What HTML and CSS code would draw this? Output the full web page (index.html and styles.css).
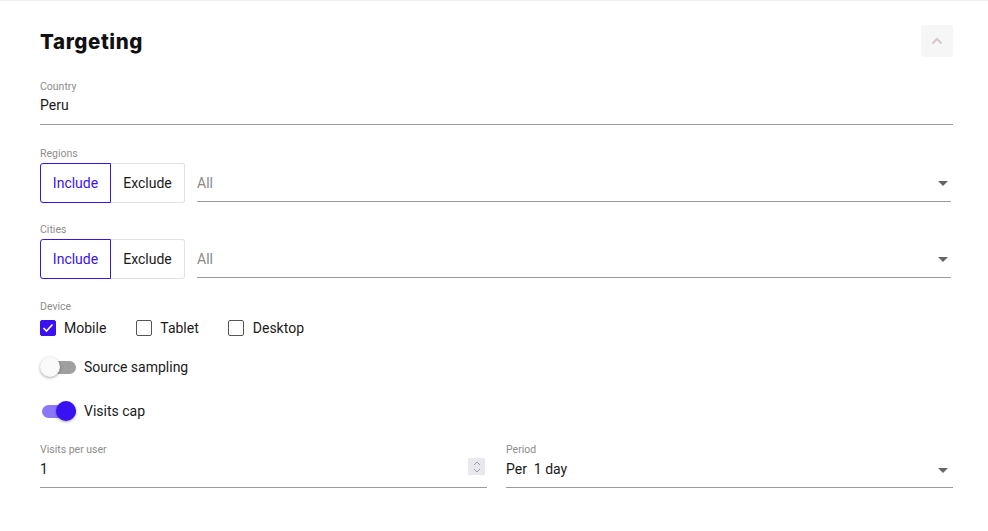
FILE: index.html
```html
<!DOCTYPE html>
<html>
<head>
<meta charset="utf-8">
<link rel="stylesheet" href="styles.css">
</head>
<body>
<div class="card">
  <div class="header">
    <h2 class="title">Targeting</h2>
    <button class="collapse">
      <svg width="12" height="8" viewBox="0 0 12 8"><path d="M1.5 6.5 L6 2 L10.5 6.5" fill="none" stroke="#d8c6cc" stroke-width="2"/></svg>
    </button>
  </div>

  <div class="field country">
    <div class="label">Country</div>
    <div class="value">Peru</div>
  </div>

  <div class="group regions">
    <div class="label">Regions</div>
    <div class="row">
      <div class="toggle">
        <span class="tbtn active">Include</span>
        <span class="tbtn">Exclude</span>
      </div>
      <div class="select"><span class="placeholder">All</span><span class="arrow"></span></div>
    </div>
  </div>

  <div class="group cities">
    <div class="label">Cities</div>
    <div class="row">
      <div class="toggle">
        <span class="tbtn active">Include</span>
        <span class="tbtn">Exclude</span>
      </div>
      <div class="select"><span class="placeholder">All</span><span class="arrow"></span></div>
    </div>
  </div>

  <div class="group device">
    <div class="label">Device</div>
    <div class="checks">
      <label class="check"><span class="box checked"><svg width="12" height="10" viewBox="0 0 12 10"><path d="M1.5 5 L4.5 8 L10.5 1.5" fill="none" stroke="#fff" stroke-width="1.6"/></svg></span>Mobile</label>
      <label class="check"><span class="box"></span>Tablet</label>
      <label class="check"><span class="box"></span>Desktop</label>
    </div>
  </div>

  <div class="switchrow first">
    <span class="switch off"><span class="track"></span><span class="thumb"></span></span>
    <span class="stext">Source sampling</span>
  </div>
  <div class="switchrow second">
    <span class="switch on"><span class="track"></span><span class="thumb"></span></span>
    <span class="stext">Visits cap</span>
  </div>

  <div class="bottom">
    <div class="field half">
      <div class="label">Visits per user</div>
      <div class="value withspin">1<span class="spin"><svg width="8" height="14" viewBox="0 0 8 14"><path d="M1 5 L4 2 L7 5 M1 9 L4 12 L7 9" fill="none" stroke="#9a9aa8" stroke-width="1"/></svg></span></div>
    </div>
    <div class="field half">
      <div class="label">Period</div>
      <div class="value withspin">Per&nbsp; 1 day<span class="arrow"></span></div>
    </div>
  </div>
</div>
</body>
</html>
```
FILE: styles.css
```css
* { box-sizing: border-box; }
html, body { margin: 0; padding: 0; background: #fff; }
body { font-family: Roboto, "Liberation Sans", sans-serif; color: #1a1a1a; }
.card {
  width: 988px;
  height: 531px;
  border-top: 1px solid #efefef;
  padding: 24px 35px 0 40px;
  background: #fff;
}
.header {
  display: flex;
  justify-content: space-between;
  align-items: center;
  height: 32px;
}
.title {
  margin: 0;
  font-family: Inter, "Open Sans", sans-serif;
  font-weight: 800;
  font-size: 20.5px;
  letter-spacing: 0.6px;
  color: #111;
}
.collapse {
  width: 32px;
  height: 32px;
  border: none;
  border-radius: 3px;
  background: #f7f6f6;
  display: flex;
  align-items: center;
  justify-content: center;
  padding: 0;
}
.label {
  font-size: 10.5px;
  color: #8d8d8d;
  line-height: 13px;
}
.field .value {
  font-size: 14px;
  line-height: 18px;
  color: #1a1a1a;
  padding: 7px 0 9px;
  border-bottom: 1px solid #9a9a9a;
  position: relative;
}
.country { margin-top: 23px; }
.country .value { padding-top: 3px; padding-bottom: 10px; }
.group { margin-top: 22px; }
.group.cities { margin-top: 20px; }
.row {
  display: flex;
  align-items: stretch;
  margin-top: 3px;
}
.toggle {
  display: flex;
  height: 40px;
}
.tbtn {
  display: flex;
  align-items: center;
  justify-content: center;
  font-size: 14px;
  height: 40px;
  border: 1px solid #e2e2e2;
  color: #1a1a1a;
}
.tbtn:first-child { width: 71px; border-radius: 3px 0 0 3px; }
.tbtn:last-child { width: 74px; border-left: none; border-radius: 0 3px 3px 0; }
.tbtn.active { border-color: #3a12f2; color: #3a12f2; }
.select {
  flex: 1;
  margin-left: 12px;
  margin-right: 2px;
  border-bottom: 1px solid #9a9a9a;
  display: flex;
  align-items: center;
  justify-content: space-between;
  height: 39px;
  padding-top: 1px;
}
.placeholder { font-size: 14px; color: #8a8a8a; }
.arrow {
  width: 0;
  height: 0;
  border-left: 5px solid transparent;
  border-right: 5px solid transparent;
  border-top: 5px solid #666;
  margin-right: 3px;
  margin-top: 2px;
}
.device { margin-top: 21px; }
.checks {
  display: flex;
  align-items: center;
  margin-top: 6px;
  height: 18px;
}
.check {
  display: flex;
  align-items: center;
  font-size: 14px;
  color: #1a1a1a;
  margin-right: 30px;
}
.check .box {
  width: 16px;
  height: 16px;
  border: 1.5px solid #555;
  border-radius: 2px;
  margin-right: 8px;
  display: flex;
  align-items: center;
  justify-content: center;
}
.check .box.checked { background: #3a12f2; border-color: #3a12f2; }
.check:nth-child(2) { margin-right: 29px; }
.check:nth-child(3) .box { margin-right: 9px; }
.switchrow {
  display: flex;
  align-items: center;
  height: 24px;
}
.switchrow.first { margin-top: 18px; }
.switchrow.second { margin-top: 20px; }
.switch {
  position: relative;
  width: 36px;
  height: 20px;
  margin-right: 8px;
}
.switch .track {
  position: absolute;
  left: 2px; right: 0;
  top: 4px;
  height: 13px;
  border-radius: 7px;
  background: #9f9f9f;
}
.switch .thumb {
  position: absolute;
  top: 0;
  width: 20px;
  height: 20px;
  border-radius: 50%;
  box-shadow: 0 1px 3px rgba(0,0,0,0.35);
}
.switch.off .thumb { left: 0; background: #fafafa; }
.switch.on .track { background: #8a78f6; }
.switch.on .thumb { left: 16px; background: #3a12f2; }
.stext { font-size: 14px; color: #1a1a1a; }
.bottom {
  display: flex;
  gap: 19px;
  margin-top: 20px;
}
.half { width: 447px; }
.bottom .value { padding: 4px 0 9px; }
.spin {
  position: absolute;
  right: 2px;
  top: 2px;
  width: 17px;
  height: 17px;
  background: #e8e8ee;
  display: flex;
  align-items: center;
  justify-content: center;
}
.withspin { display: flex; justify-content: space-between; align-items: center; }
.withspin .arrow { margin-right: 5px; }
```
